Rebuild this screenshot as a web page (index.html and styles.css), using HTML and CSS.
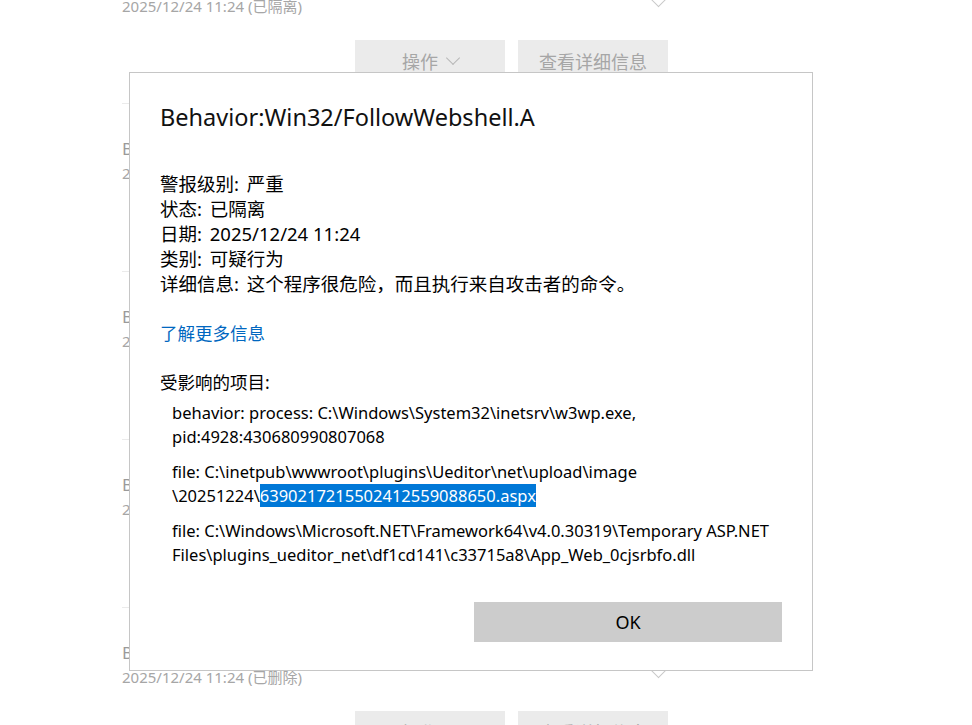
FILE: index.html
```html
<!DOCTYPE html>
<html lang="zh-CN">
<head>
<meta charset="utf-8">
<title>Behavior:Win32/FollowWebshell.A</title>
<link rel="stylesheet" href="styles.css">
</head>
<body>
<div class="list">
  <div class="item item-first">
    <div class="item-head">
      <div class="item-date">2025/12/24 11:24 (已隔离)</div>
      <span class="chev"></span>
    </div>
    <div class="item-actions">
      <div class="btn-bg">操作 <span class="chev-sm"></span></div>
      <div class="btn-bg">查看详细信息</div>
    </div>
  </div>
  <div class="item">
    <div class="item-title">Behavior:Win32/FollowWebshell.A</div>
    <div class="item-head">
      <div class="item-date">2025/12/24 11:24 (已隔离)</div>
      <span class="chev"></span>
    </div>
    <div class="item-actions">
      <div class="btn-bg">操作 <span class="chev-sm"></span></div>
      <div class="btn-bg">查看详细信息</div>
    </div>
  </div>
  <div class="item">
    <div class="item-title">Behavior:Win32/FollowWebshell.A</div>
    <div class="item-head">
      <div class="item-date">2025/12/24 11:24 (已隔离)</div>
      <span class="chev"></span>
    </div>
    <div class="item-actions">
      <div class="btn-bg">操作 <span class="chev-sm"></span></div>
      <div class="btn-bg">查看详细信息</div>
    </div>
  </div>
  <div class="item">
    <div class="item-title">Behavior:Win32/FollowWebshell.A</div>
    <div class="item-head">
      <div class="item-date">2025/12/24 11:24 (已隔离)</div>
      <span class="chev"></span>
    </div>
    <div class="item-actions">
      <div class="btn-bg">操作 <span class="chev-sm"></span></div>
      <div class="btn-bg">查看详细信息</div>
    </div>
  </div>
  <div class="item">
    <div class="item-title">Behavior:Win32/FollowWebshell.A</div>
    <div class="item-head">
      <div class="item-date">2025/12/24 11:24 (已删除)</div>
      <span class="chev"></span>
    </div>
    <div class="item-actions">
      <div class="btn-bg">操作 <span class="chev-sm"></span></div>
      <div class="btn-bg">查看详细信息</div>
    </div>
  </div>
</div>

<div class="dialog">
  <h1 class="dlg-title">Behavior:Win32/FollowWebshell.A</h1>
  <div class="info">
    <div><span class="lbl">警报级别:</span> 严重</div>
    <div><span class="lbl">状态:</span> 已隔离</div>
    <div><span class="lbl">日期:</span> 2025/12/24 11:24</div>
    <div><span class="lbl">类别:</span> 可疑行为</div>
    <div><span class="lbl">详细信息:</span> 这个程序很危险，而且执行来自攻击者的命令。</div>
  </div>
  <a class="more" href="#">了解更多信息</a>
  <div class="affected">受影响的项目:</div>
  <div class="entries">
    <div class="entry">behavior: process: C:\Windows\System32\inetsrv\w3wp.exe,<br>pid:4928:430680990807068</div>
    <div class="entry">file: C:\inetpub\wwwroot\plugins\Ueditor\net\upload\image<br>\20251224\<span class="sel">6390217215502412559088650.aspx</span></div>
    <div class="entry">file: C:\Windows\Microsoft.NET\Framework64\v4.0.30319\Temporary ASP.NET<br>Files\plugins_ueditor_net\df1cd141\c33715a8\App_Web_0cjsrbfo.dll</div>
  </div>
  <div class="dlg-footer">
    <button class="ok">OK</button>
  </div>
</div>
</body>
</html>
```
FILE: styles.css
```css
html, body {
  margin: 0;
  padding: 0;
  background: #fff;
  height: 100%;
  overflow: hidden;
}
body {
  font-family: "Noto Sans", "Noto Sans CJK SC", sans-serif;
  color: #000;
  position: relative;
}

/* background list */
.list {
  padding-left: 122px;
  width: 546px;
  margin-top: -6px;
}
.item {
  border-top: 1px solid #ebebeb;
  height: 168px;
  padding-top: 33px;
  box-sizing: border-box;
}
.item-first {
  border-top: none;
  height: 109px;
  padding-top: 0;
}
.item-title {
  font-size: 17px;
  line-height: 24px;
  color: #9a9a9a;
  white-space: nowrap;
}
.item-head {
  display: flex;
  justify-content: space-between;
  align-items: flex-start;
}
.item-date {
  font-size: 15px;
  line-height: 24px;
  color: #a6a6a6;
}
.chev {
  width: 10px;
  height: 10px;
  border-right: 1px solid #c8c8c8;
  border-bottom: 1px solid #c8c8c8;
  transform: rotate(45deg);
  margin-right: 4px;
  margin-top: 0;
}
.item-actions {
  display: flex;
  justify-content: flex-end;
  gap: 13px;
  margin-top: 22px;
}
.btn-bg {
  width: 150px;
  height: 42px;
  background: #ebebeb;
  color: #a6a6a6;
  font-size: 18px;
  display: flex;
  align-items: center;
  justify-content: center;
  gap: 6px;
}
.chev-sm {
  width: 9px;
  height: 9px;
  border-right: 1px solid #b8b8b8;
  border-bottom: 1px solid #b8b8b8;
  transform: rotate(45deg);
  margin-top: -6px;
  margin-left: 4px;
}

/* dialog */
.dialog {
  position: absolute;
  left: 129px;
  top: 72px;
  width: 684px;
  height: 599px;
  box-sizing: border-box;
  border: 1px solid #c6c6c6;
  background: #fff;
  padding: 28px 30px 0 30px;
  display: flex;
  flex-direction: column;
  align-items: flex-start;
}
.dlg-title {
  margin: 0;
  font-size: 23.5px;
  font-weight: 400;
  line-height: 32px;
  color: #111;
}
.info {
  margin-top: 38px;
  font-size: 18.5px;
  line-height: 25px;
}
.lbl {
  margin-right: 3px;
}
.more {
  margin-top: 25px;
  font-size: 17.5px;
  line-height: 25px;
  color: #0067c0;
  text-decoration: none;
}
.affected {
  margin-top: 24px;
  font-size: 17.5px;
  line-height: 25px;
}
.entries {
  margin-top: 6px;
  padding-left: 12px;
  display: flex;
  flex-direction: column;
  gap: 11px;
}
.entry {
  font-size: 16.5px;
  line-height: 24px;
  white-space: nowrap;
}
.sel {
  background: #0078d7;
  color: #fff;
}
.dlg-footer {
  align-self: stretch;
  display: flex;
  justify-content: flex-end;
  margin-top: auto;
  padding-bottom: 28px;
}
.ok {
  width: 308px;
  height: 40px;
  border: none;
  background: #cccccc;
  font-family: "Noto Sans", "Noto Sans CJK SC", sans-serif;
  font-size: 18px;
  color: #000;
  margin-right: 0;
}
```
